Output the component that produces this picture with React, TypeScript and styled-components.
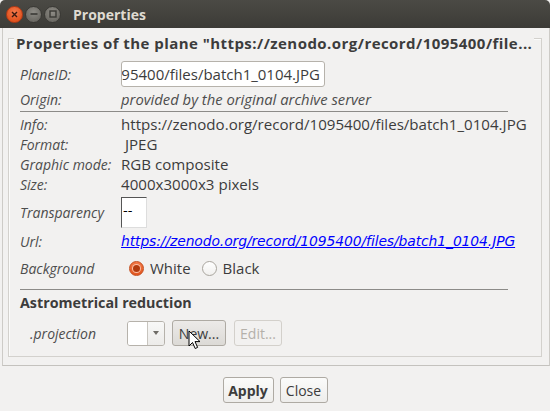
import React from "react";
import styled, { createGlobalStyle } from "styled-components";

const Global = createGlobalStyle`
  html, body { margin: 0; padding: 0; background: #f2f1f0; }
  body { font-family: "Open Sans", "DejaVu Sans", sans-serif; color: #3c3c3c; }
  * { box-sizing: border-box; }
`;

const Window = styled.div`
  width: 550px;
  height: 411px;
  display: flex;
  flex-direction: column;
  background: #f2f1f0;
  overflow: hidden;
  position: relative;
`;

const TitleBar = styled.div`
  height: 28px;
  flex: none;
  display: flex;
  align-items: center;
  padding-left: 6px;
  background: linear-gradient(#4b4a45, #3c3b37);
  border-radius: 5px 5px 0 0;
`;

const WinButton = styled.div<{ $kind: "close" | "min" | "max" }>`
  width: 17px;
  height: 17px;
  border-radius: 50%;
  margin-right: 2px;
  display: flex;
  align-items: center;
  justify-content: center;
  border: 1px solid ${(p) => (p.$kind === "close" ? "#b53a15" : "#3a3935")};
  background: ${(p) =>
    p.$kind === "close"
      ? "radial-gradient(circle at 50% 35%, #f47a4d, #e2541f 70%)"
      : "radial-gradient(circle at 50% 35%, #8e8c86, #6d6b65 70%)"};
`;

const Title = styled.div`
  margin-left: 10px;
  font-size: 14px;
  font-weight: 700;
  color: #dfdbd2;
`;

const OuterFrame = styled.div`
  height: 338px;
  flex: none;
  margin-left: 2px;
  border-left: 1px solid #cdcbc7;
  border-right: 1px solid #cdcbc7;
  border-bottom: 1px solid #c4c2be;
  padding: 10px 7px 8px 5px;
  display: flex;
  flex-direction: column;
`;

const Group = styled.div`
  flex: 1;
  border: 1px solid #d3d1cd;
  box-shadow: inset 1px 1px 0 #fbfbfa;
  display: flex;
  flex-direction: column;
`;

const GroupTitle = styled.div`
  margin: -5px 0 0 5px;
  padding: 0 2px;
  line-height: 18px;
  height: 18px;
  width: fit-content;
  background: #f2f1f0;
  font-size: 15px;
  font-weight: 700;
  white-space: nowrap;
  letter-spacing: 0.45px;
`;

const Row = styled.div<{ $h: number; $mt?: number }>`
  display: grid;
  grid-template-columns: 101px 1fr;
  align-items: center;
  height: ${(p) => p.$h}px;
  margin-top: ${(p) => p.$mt ?? 0}px;
  padding-left: 11px;
`;

const Label = styled.div<{ $indent?: number }>`
  font-style: italic;
  font-size: 14px;
  color: #4d4d4d;
  white-space: nowrap;
  padding-left: ${(p) => p.$indent ?? 0}px;
`;

const Value = styled.div`
  font-size: 15.1px;
  white-space: nowrap;
  display: flex;
  align-items: center;
`;

const Note = styled.div`
  font-size: 14.8px;
  font-style: italic;
  color: #4d4d4d;
  white-space: nowrap;
`;

const TextInput = styled.div`
  width: 204px;
  height: 26px;
  border: 1px solid #b6b2ab;
  border-radius: 3px;
  background: #fff;
  overflow: hidden;
  display: flex;
  justify-content: flex-end;
  align-items: center;
  padding-right: 4px;
  font-size: 15px;
  white-space: nowrap;
`;

const InputText = styled.span`
  flex: none;
  margin-left: -6px;
`;

const Separator = styled.div<{ $mt?: number }>`
  margin: ${(p) => p.$mt ?? 0}px 0 0 11px;
  width: 488px;
  height: 1px;
  background: #8c8b88;
  flex: none;
`;

const SmallBox = styled.div`
  width: 26px;
  height: 31px;
  background: #fff;
  border-top: 1px solid #555;
  border-left: 1px solid #555;
  border-right: 1px solid #ddd;
  border-bottom: 1px solid #ddd;
  font-family: "DejaVu Sans", sans-serif;
  font-size: 13px;
  color: #000;
  padding: 5px 0 0 1px;
  line-height: 16px;
`;

const Link = styled.a`
  font-family: "DejaVu Sans", sans-serif;
  font-style: italic;
  font-size: 13.9px;
  color: #0000ff;
  text-decoration: underline;
  white-space: nowrap;
  letter-spacing: -0.1px;
`;

const RadioGroup = styled.div`
  display: flex;
  align-items: center;
  padding-left: 8px;
  gap: 11px;
`;

const RadioItem = styled.label`
  display: flex;
  align-items: center;
  gap: 6px;
  font-size: 15px;
`;

const RadioCircle = styled.span<{ $on?: boolean }>`
  width: 15px;
  height: 15px;
  border-radius: 50%;
  display: flex;
  align-items: center;
  justify-content: center;
  border: 1px solid ${(p) => (p.$on ? "#c44c1c" : "#a9a59e")};
  background: ${(p) =>
    p.$on ? "linear-gradient(#f37a48, #e2561f)" : "linear-gradient(#ffffff, #f1f0ee)"};
  &::after {
    content: "";
    display: ${(p) => (p.$on ? "block" : "none")};
    width: 7px;
    height: 7px;
    border-radius: 50%;
    background: #b23b0e;
    box-shadow: 0 0 0 1px #f9c0a6;
  }
`;

const SectionTitle = styled.div<{ $mt?: number }>`
  margin-top: ${(p) => p.$mt ?? 0}px;
  padding-left: 11px;
  height: 18px;
  line-height: 18px;
  font-size: 14.3px;
  font-weight: 700;
`;

const Controls = styled.div`
  display: flex;
  align-items: center;
  padding-left: 6px;
  position: relative;
`;

const Combo = styled.div`
  width: 38px;
  height: 25px;
  border: 1px solid #b6b2ab;
  border-radius: 3px;
  display: flex;
  overflow: hidden;
  margin-right: 7px;
`;

const ComboField = styled.div`
  width: 20px;
  background: #fff;
  border-right: 1px solid #c8c5bf;
`;

const ComboArrow = styled.div`
  flex: 1;
  background: linear-gradient(#f8f8f7, #ecebe9);
  display: flex;
  align-items: center;
  justify-content: center;
  &::after {
    content: "";
    border-left: 3.5px solid transparent;
    border-right: 3.5px solid transparent;
    border-top: 4px solid #6f6c66;
  }
`;

const Button = styled.button<{ $w: number; $bold?: boolean; $hover?: boolean; $ml?: number }>`
  width: ${(p) => p.$w}px;
  height: 26px;
  margin-left: ${(p) => p.$ml ?? 0}px;
  padding: 0;
  border: 1px solid ${(p) => (p.disabled ? "#d3d0cb" : "#aeaaa3")};
  border-radius: 3px;
  background: ${(p) =>
    p.$hover
      ? "linear-gradient(#eceae8, #dcdad6)"
      : p.disabled
      ? "#f2f1f0"
      : "linear-gradient(#fbfbfa, #eeedeb)"};
  font-family: "Open Sans", "DejaVu Sans", sans-serif;
  font-size: 14px;
  font-weight: ${(p) => (p.$bold ? 700 : 400)};
  color: ${(p) => (p.disabled ? "#b4b0aa" : "#3c3c3c")};
  white-space: nowrap;
`;

const Cursor = styled.svg`
  position: absolute;
  left: 67px;
  top: 10px;
  width: 13px;
  height: 20px;
  pointer-events: none;
`;

const ButtonBar = styled.div`
  flex: 1;
  display: flex;
  justify-content: center;
  align-items: flex-start;
  gap: 6px;
  padding-top: 11px;
`;

const url = "https://zenodo.org/record/1095400/files/batch1_0104.JPG";

export default function App() {
  return (
    <Window>
      <Global />
      <TitleBar>
        <WinButton $kind="close">
          <svg width="7" height="7" viewBox="0 0 7 7">
            <path d="M1 1L6 6M6 1L1 6" stroke="#3a1a10" strokeWidth="1.4" />
          </svg>
        </WinButton>
        <WinButton $kind="min">
          <svg width="8" height="8" viewBox="0 0 8 8">
            <path d="M0.5 4H7.5" stroke="#3a3935" strokeWidth="1.6" />
          </svg>
        </WinButton>
        <WinButton $kind="max">
          <svg width="8" height="8" viewBox="0 0 8 8">
            <rect x="1" y="1" width="6" height="6" fill="none" stroke="#3a3935" strokeWidth="1.4" />
          </svg>
        </WinButton>
        <Title>Properties</Title>
      </TitleBar>
      <OuterFrame>
        <Group>
          <GroupTitle>Properties of the plane "https://zenodo.org/record/1095400/file...</GroupTitle>
          <Row $h={26} $mt={9}>
            <Label>PlaneID:</Label>
            <TextInput>
              <InputText>95400/files/batch1_0104.JPG</InputText>
            </TextInput>
          </Row>
          <Row $h={24}>
            <Label>Origin:</Label>
            <Note>provided by the original archive server</Note>
          </Row>
          <Separator />
          <Row $h={20} $mt={2}>
            <Label>Info:</Label>
            <Value>{url}</Value>
          </Row>
          <Row $h={20}>
            <Label>Format:</Label>
            <Value>&nbsp;JPEG</Value>
          </Row>
          <Row $h={20}>
            <Label>Graphic mode:</Label>
            <Value>RGB composite</Value>
          </Row>
          <Row $h={20}>
            <Label>Size:</Label>
            <Value>4000x3000x3 pixels</Value>
          </Row>
          <Row $h={31} $mt={3}>
            <Label>Transparency</Label>
            <Value>
              <SmallBox>--</SmallBox>
            </Value>
          </Row>
          <Row $h={20} $mt={3}>
            <Label>Url:</Label>
            <Value>
              <Link href="#">{url}</Link>
            </Value>
          </Row>
          <Row $h={22} $mt={6}>
            <Label>Background</Label>
            <RadioGroup>
              <RadioItem>
                <RadioCircle $on />
                White
              </RadioItem>
              <RadioItem>
                <RadioCircle />
                Black
              </RadioItem>
            </RadioGroup>
          </Row>
          <Separator $mt={10} />
          <SectionTitle $mt={4}>Astrometrical reduction</SectionTitle>
          <Row $h={26} $mt={8}>
            <Label $indent={10}>.projection</Label>
            <Controls>
              <Combo>
                <ComboField />
                <ComboArrow />
              </Combo>
              <Button $w={54} $hover>New...</Button>
              <Button $w={48} $ml={8} disabled>
                Edit...
              </Button>
              <Cursor viewBox="0 0 13 20">
                <path
                  d="M1 1V16L4.5 12.5L7.2 18.5L9.6 17.4L7 11.6H12Z"
                  fill="#fff"
                  stroke="#000"
                  strokeWidth="1"
                  strokeLinejoin="round"
                />
              </Cursor>
            </Controls>
          </Row>
        </Group>
      </OuterFrame>
      <ButtonBar>
        <Button $w={51} $bold>
          Apply
        </Button>
        <Button $w={48}>Close</Button>
      </ButtonBar>
    </Window>
  );
}
